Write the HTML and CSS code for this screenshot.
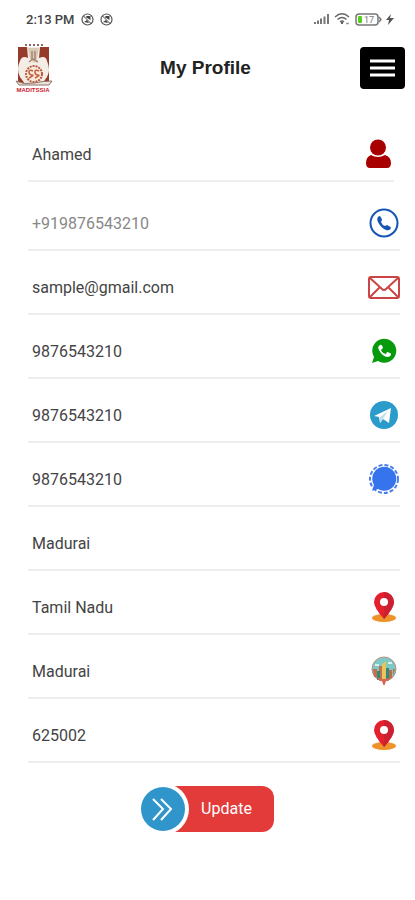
FILE: index.html
```html
<!DOCTYPE html>
<html lang="en">
<head>
    <meta charset="UTF-8">
    <meta name="viewport" content="width=device-width, initial-scale=1.0">
    <title>My Profile</title>
    <link rel="stylesheet" href="styles.css">
</head>
<body>
    <div class="status-bar">
        <span class="time">2:13 PM</span>
        <svg class="status-icon" width="13" height="13" viewBox="0 0 13 13"><circle cx="6.5" cy="6.5" r="5.5" fill="none" stroke="#555" stroke-width="1.2"/><path d="M4.500 4L6 3h3.500v4zM3 9l3-2 2 3" fill="#444"/><path d="M2.5 3l8 8" stroke="#444"/></svg>
        <svg class="status-icon" width="13" height="13" viewBox="0 0 13 13"><circle cx="6.5" cy="6.5" r="5.5" fill="none" stroke="#555" stroke-width="1.2"/><path d="M4.500 4L6 3h3.500v4zM3 9l3-2 2 3" fill="#444"/><path d="M2.5 3l8 8" stroke="#444"/></svg>
        <div class="status-right">
            <svg width="17" height="12" viewBox="0 0 17 12"><path d="M2 11V9M5 11V7.500M8 11V5.500M11.500 11V3.500M15 11V1" stroke="#777" stroke-width="2"/></svg>
            <svg width="17" height="14" viewBox="0 0 17 14" fill="none" stroke="#666" stroke-width="1.500"><path d="M1 5q7-6.500 14 0M3.500 7.500q4.500-4 9 0M6 10q2-2 4 0"/><path d="M8 10v2" stroke-width="2"/><path d="M12 11.500h3" stroke="#999"/></svg>
            <svg width="27" height="13" viewBox="0 0 27 13"><rect x="1" y="1" width="22" height="11" rx="3" fill="none" stroke="#777" stroke-width="1.500"/><path d="M24 4l2 2.500-2 2.500" fill="none" stroke="#777" stroke-width="1.500"/><rect x="3" y="3" width="4" height="7" rx="1" fill="#55d01c"/><text x="9" y="10" class="battery-level">17</text></svg>
            <svg width="8" height="12" viewBox="0 0 8 12"><path d="M5 1L0 7h3L2 12l6-7H4z" fill="#555"/></svg>
        </div>
    </div>

    <header class="header">
        <svg class="logo" width="38" height="50" viewBox="0 0 38 50">
            <path d="M10 2h18" stroke="#8a6a60" stroke-width="2" stroke-dasharray="2 2"/>
            <rect x="3" y="4" width="31" height="37" fill="#963a2c"/>
            <path d="M12 4h13l-1 11q7-3 8 3 4 9 0 16l-5 7H10l-5-7q-4-8 0-16 2-6 8-3z" fill="#f4ede5"/>
            <path d="M13 5h11l-2 11-3 4-4-4z" fill="#d8cbb5"/>
            <path d="M17 8v9M20 8v9M14 19l4-3 5 3" fill="none" stroke="#a88878" stroke-width="1.500"/>
            <circle cx="19" cy="31" r="8" fill="#f8e8dc" stroke="#b8583c" stroke-width="2" stroke-dasharray="2 1"/>
            <path d="M18 28q-4-2-4 1t3 3-3 3M24 28q-4-2-4 1t3 3-3 3" fill="none" stroke="#c0603c" stroke-width="1.500"/>
            <path d="M1 38q8 4 18 2t18-2l-3 4H4z" fill="#eee4da" stroke="#8c7468" stroke-width="1"/>
            <text x="18" y="49" class="logo-text">MADITSSIA</text>
        </svg>
        <h1>My Profile</h1>
        <button type="button" class="menu-btn" aria-label="Menu">
            <svg width="25" height="18" viewBox="0 0 25 18"><path d="M0 2h25M0 9h25M0 16h25" stroke="#fff" stroke-width="3"/></svg>
        </button>
    </header>

    <form class="profile-form">
        <div class="field field-name">
            <input type="text" aria-label="Name" value="Ahamed">
            <svg class="icon" viewBox="0 0 32 32" fill="#a80000"><circle cx="16" cy="9.500" r="8"/><path d="M9 17q7 4 14 0 6 2 6 8 0 5-4 5H8q-4 0-4-5 0-6 5-8z"/></svg>
        </div>
        <div class="field">
            <input type="tel" class="phone" aria-label="Phone" value="+919876543210" readonly>
            <svg class="icon" viewBox="0 0 32 32"><circle cx="16" cy="16" r="13.500" fill="#fff" stroke="#1455b5" stroke-width="2"/><path d="M11 9q-3 2-1 6 3 6 8 8 4 1 5-2 0-1-4-3l-2 1q-3-1-4-4l1-2q-1-4-3-4z" fill="#1455b5"/></svg>
        </div>
        <div class="field">
            <input type="email" aria-label="Email" value="sample@gmail.com">
            <svg class="icon" viewBox="0 0 32 32" fill="none" stroke="#cc4545" stroke-width="2"><rect x="1" y="6" width="30" height="21" rx="2"/><path d="M2 7l12 11q2 2 4 0L30 7M2 26l10-10M30 26l-10-10"/></svg>
        </div>
        <div class="field">
            <input type="tel" aria-label="WhatsApp" value="9876543210">
            <svg class="icon" viewBox="0 0 32 32"><path d="M4 28l2-6a12 12 0 1 1 4 4z" fill="#079a0c"/><path d="M12 10q-3 2-1 5 3 6 8 7 4 0 4-3 0-1-4-2l-1 2q-4-1-5-4l2-2q-1-4-3-3z" fill="#fff"/></svg>
        </div>
        <div class="field">
            <input type="tel" aria-label="Telegram" value="9876543210">
            <svg class="icon" viewBox="0 0 32 32"><circle cx="16" cy="16" r="14" fill="#2a9bcb"/><path d="M6 17l17-8-2 15-6-4-3 4-1-6z" fill="#fff"/><path d="M12 18l8-6-5 8-3 4z" fill="#c4dfed"/></svg>
        </div>
        <div class="field">
            <input type="tel" aria-label="Signal" value="9876543210">
            <svg class="icon" viewBox="0 0 32 32"><circle cx="16" cy="16" r="14" fill="none" stroke="#4b7fee" stroke-width="2" stroke-dasharray="4 2"/><path d="M4 28l2-6a12 12 0 1 1 4 4z" fill="#3674ed"/></svg>
        </div>
        <div class="field">
            <input type="text" aria-label="City" value="Madurai">
        </div>
        <div class="field">
            <input type="text" aria-label="State" value="Tamil Nadu">
            <svg class="icon" viewBox="0 0 32 32"><ellipse cx="16" cy="27" rx="12" ry="4" fill="#ee922a"/><path d="M16 28Q6 17 6 11a10 10 0 0 1 20 0q0 6-10 17z" fill="#e3202d"/><path d="M16 1a10 10 0 0 1 10 10q0 6-10 17z" fill="#cc1f30"/><circle cx="16" cy="11" r="4" fill="#fff"/></svg>
        </div>
        <div class="field">
            <input type="text" aria-label="District" value="Madurai">
            <svg class="icon" viewBox="0 0 32 32"><path d="M13 24h6l-3 7z" fill="#dd5a48"/><circle cx="16" cy="14" r="12" fill="#7cc9c5" stroke="#c48f82" stroke-width="1"/><path d="M5 14h4v8H6zM11 11h3v13h-3z" fill="#c0724e"/><path d="M14 9l4-3v19h-4z" fill="#e8c65a"/><path d="M9 16h3v9H9zM18 13h3v11h-3z" fill="#37867f"/><path d="M21 15h3v8h-3zM25 14h2l-2 7z" fill="#b96e4b"/><path d="M7 10h4M20 8h4" stroke="#d9f0ec" stroke-width="2"/><path d="M7 22q9 4 18 0l-5 4h-8z" fill="#d66a50"/></svg>
        </div>
        <div class="field">
            <input type="text" aria-label="Pincode" value="625002">
            <svg class="icon" viewBox="0 0 32 32"><ellipse cx="16" cy="27" rx="12" ry="4" fill="#ee922a"/><path d="M16 28Q6 17 6 11a10 10 0 0 1 20 0q0 6-10 17z" fill="#e3202d"/><path d="M16 1a10 10 0 0 1 10 10q0 6-10 17z" fill="#cc1f30"/><circle cx="16" cy="11" r="4" fill="#fff"/></svg>
        </div>

        <div class="actions">
            <button type="submit" class="update-btn">
                <svg class="arrow" viewBox="0 0 44 44" fill="none" stroke="#fff" stroke-width="2"><path d="M12 12l10 10-10 11M20 12l10 10-10 11"/></svg>
                <span class="update-text">Update</span>
            </button>
        </div>
    </form>
</body>
</html>
```
FILE: styles.css
```css
* {
    box-sizing: border-box;
}
body {
    font-family: Roboto, sans-serif;
    background-color: #fff;
    color: #444;
    margin: 0;
}
button {
    border: none;
    padding: 0;
    font-family: inherit;
    cursor: pointer;
}
.status-bar {
    display: flex;
    align-items: center;
    gap: 6px;
    height: 38px;
    padding: 0 21px 0 26px;
}
.time {
    font-size: 13px;
    font-weight: 500;
    color: #444;
}
.status-right {
    display: flex;
    align-items: center;
    gap: 4px;
    margin-left: auto;
}
.battery-level {
    font-size: 9px;
    fill: #777;
}
.header {
    display: grid;
    grid-template-columns: 1fr auto 1fr;
    align-items: center;
    height: 60px;
    padding: 0 10px 0 6px;
}
.header h1 {
    margin: 0;
    font-family: "Liberation Sans", Arial, sans-serif;
    font-size: 19px;
    color: #222;
}
.logo {
    margin-left: 9px;
}
.logo-text {
    font-family: "Liberation Sans", Arial, sans-serif;
    font-size: 6px;
    font-weight: bold;
    fill: #cc2030;
    text-anchor: middle;
}
.menu-btn {
    display: flex;
    align-items: center;
    justify-content: center;
    justify-self: end;
    width: 45px;
    height: 42px;
    background-color: #000;
    border-radius: 4px;
}
.profile-form {
    padding: 20px 15px 0 28px;
}
.field {
    display: flex;
    align-items: center;
    height: 64px;
    padding: 10px 0 0 4px;
    border-bottom: 2px solid #eee;
}
.field-name {
    margin: 0 6px 5px 0;
}
.field input {
    flex: 1;
    min-width: 0;
    padding: 0;
    border: none;
    outline: none;
    background: none;
    font-family: inherit;
    font-size: 16px;
    color: #444;
}
.field .phone {
    color: #888;
}
.icon {
    width: 32px;
    height: 32px;
}
/* the form is padded more on the left, keep the button in the page centre */
.actions {
    display: flex;
    justify-content: center;
    margin: 23px 0 0 -13px;
}
.update-btn {
    display: flex;
    align-items: center;
    background: none;
}
.arrow {
    position: relative;
    width: 44px;
    height: 44px;
    border-radius: 50%;
    background-color: #3095cb;
    box-shadow: 0 0 0 4px #fff;
}
.update-text {
    height: 46px;
    margin-left: -22px;
    padding: 0 22px 0 38px;
    border-radius: 0 12px 12px 0;
    background-color: #e33a3a;
    color: #fff;
    font-size: 16px;
    line-height: 46px;
}
```
